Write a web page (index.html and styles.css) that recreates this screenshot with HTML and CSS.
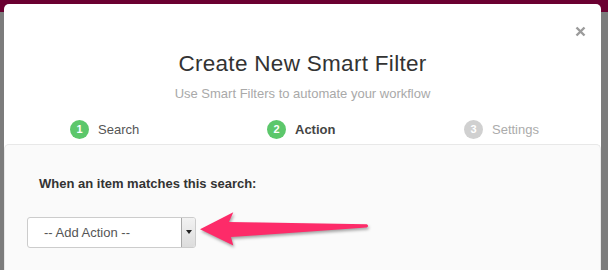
FILE: index.html
```html
<!DOCTYPE html>
<html>
<head>
<meta charset="utf-8">
<link rel="stylesheet" href="styles.css">
</head>
<body>
<div class="backdrop">
  <div class="modal">
    <button class="close" aria-label="Close">
      <svg width="11" height="11" viewBox="0 0 11 11"><path d="M1.5 1.5 L9.5 9.5 M9.5 1.5 L1.5 9.5" stroke="#9b9b9b" stroke-width="2.4" stroke-linecap="butt"/></svg>
    </button>
    <h1 class="title">Create New Smart Filter</h1>
    <p class="subtitle">Use Smart Filters to automate your workflow</p>
    <div class="steps">
      <div class="step done"><span class="num">1</span><span class="label">Search</span></div>
      <div class="step active"><span class="num">2</span><span class="label">Action</span></div>
      <div class="step todo"><span class="num">3</span><span class="label">Settings</span></div>
    </div>
    <div class="panel">
      <div class="panel-label">When an item matches this search:</div>
      <div class="select">
        <span class="select-text">-- Add Action --</span>
        <span class="select-btn"><span class="caret"></span></span>
      </div>
      <svg class="annot-arrow" width="180" height="50" viewBox="0 0 180 50">
        <path d="M5 24.3 L38.3 7.3 L34 17 L171.7 19.3 Q174.5 20.8 171.7 22.6 L36 32 L38.3 40.6 Z" fill="#fd2b69"/>
      </svg>
    </div>
  </div>
</div>
</body>
</html>
```

FILE: styles.css
```css
html, body {
  margin: 0;
  padding: 0;
  height: 270px;
  overflow: hidden;
}
body {
  font-family: "Liberation Sans", Arial, sans-serif;
}
.backdrop {
  height: 270px;
  background: linear-gradient(#6b0031 0, #6b0031 12px, #7c7c7c 12px, #7c7c7c 100%);
  padding: 4px 0 0 4px;
  box-sizing: border-box;
  overflow: hidden;
}
.modal {
  position: relative;
  width: 597px;
  height: 400px;
  background: #ffffff;
  border-radius: 5px 5px 0 0;
  text-align: center;
}
.close {
  position: absolute;
  top: 22px;
  right: 15px;
  width: 11px;
  height: 11px;
  padding: 0;
  border: 0;
  background: transparent;
  display: block;
}
.close svg {
  display: block;
}
.title {
  margin: 0;
  padding-top: 47px;
  font-size: 22.5px;
  letter-spacing: 0.3px;
  line-height: 26px;
  font-weight: normal;
  color: #333333;
}
.subtitle {
  margin: 9px 0 0;
  font-size: 13px;
  line-height: 16px;
  color: #a9a9a9;
}
.steps {
  display: grid;
  grid-template-columns: repeat(3, 197px);
  padding-left: 66px;
  margin-top: 17px;
  height: 20px;
  text-align: left;
}
.step {
  display: flex;
  align-items: center;
  gap: 9px;
  font-size: 13px;
}
.num {
  width: 19px;
  height: 19px;
  border-radius: 50%;
  background: #5cc76b;
  color: #ffffff;
  font-size: 11px;
  font-weight: bold;
  line-height: 19px;
  text-align: center;
}
.step.done .label {
  color: #555555;
}
.step.active .label {
  color: #444444;
  font-weight: bold;
}
.step.todo .num {
  background: #d0d0d0;
}
.step.todo .label {
  color: #ababab;
}
.panel {
  position: relative;
  margin-top: 5px;
  height: 300px;
  background: #fafafa;
  border: 1px solid #e8e8e8;
  border-bottom: 0;
  border-radius: 5px 5px 0 0;
  text-align: left;
  padding-top: 31px;
  box-sizing: border-box;
}
.panel-label {
  margin-left: 34px;
  font-size: 13px;
  line-height: 16px;
  font-weight: bold;
  color: #333333;
}
.select {
  margin: 25px 0 0 22px;
  width: 169px;
  height: 31px;
  box-sizing: border-box;
  background: #ffffff;
  border: 1px solid #cccccc;
  border-radius: 3px;
  display: flex;
  align-items: stretch;
  overflow: hidden;
}
.select-text {
  flex: 1;
  padding-left: 16px;
  font-size: 13px;
  line-height: 29px;
  color: #555555;
}
.select-btn {
  width: 14px;
  background: linear-gradient(#f2f2f2, #dcdcdc);
  border-left: 1px solid #a8a8a8;
  display: flex;
  justify-content: center;
  padding-top: 12px;
  box-sizing: border-box;
}
.caret {
  width: 0;
  height: 0;
  border-left: 3px solid transparent;
  border-right: 3px solid transparent;
  border-top: 4px solid #222222;
}
.annot-arrow {
  position: absolute;
  left: 190px;
  top: 60px;
  overflow: visible;
  filter: drop-shadow(1px 2px 1.5px rgba(0, 0, 0, 0.35));
}
```
